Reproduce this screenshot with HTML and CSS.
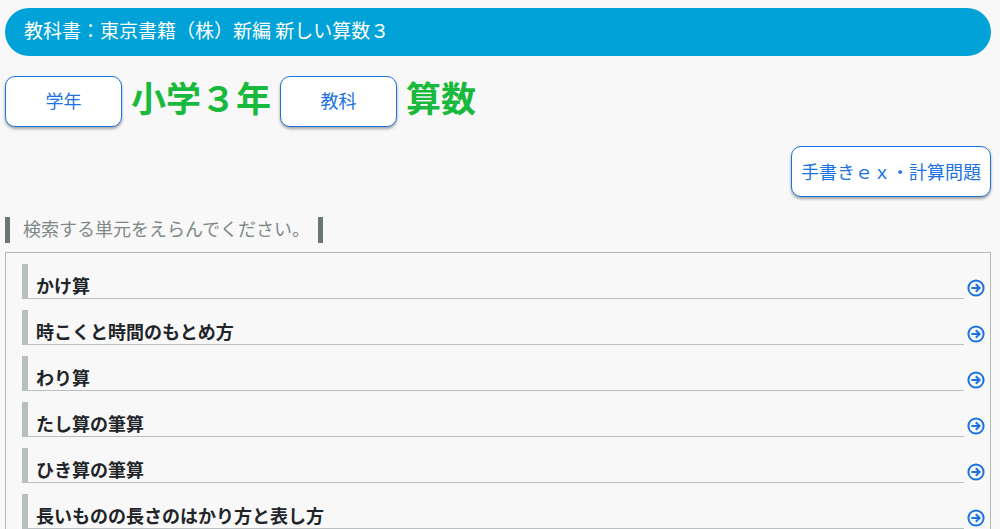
FILE: index.html
```html
<!DOCTYPE html>
<html lang="ja">

<head>
    <meta charset="UTF-8">
    <meta name="viewport" content="width=device-width, initial-scale=1.0">
    <title>小学３年 算数</title>
    <link rel="stylesheet" href="styles.css">
</head>

<body>
    <svg class="defs" aria-hidden="true">
        <symbol id="arrow" viewBox="0 0 18 18">
            <circle cx="9" cy="9" r="7.6" />
            <path d="M4.4 9h8M8.8 5.2L12.6 9l-3.8 3.8" />
        </symbol>
    </svg>

    <header class="book">教科書：東京書籍（株）新編 新しい算数３</header>

    <div class="subject">
        <button type="button" class="btn">学年</button>
        <h1>小学３年</h1>
        <button type="button" class="btn">教科</button>
        <h1>算数</h1>
    </div>

    <div class="tools">
        <a class="btn wide" href="#keisan">手書きｅｘ・計算問題</a>
    </div>

    <p class="guide">検索する単元をえらんでください。</p>

    <ul class="units">
        <li>
            <h2>かけ算</h2>
            <a href="#unit1" aria-label="かけ算"><svg class="icon"><use href="#arrow" /></svg></a>
        </li>
        <li>
            <h2>時こくと時間のもとめ方</h2>
            <a href="#unit2" aria-label="時こくと時間のもとめ方"><svg class="icon"><use href="#arrow" /></svg></a>
        </li>
        <li>
            <h2>わり算</h2>
            <a href="#unit3" aria-label="わり算"><svg class="icon"><use href="#arrow" /></svg></a>
        </li>
        <li>
            <h2>たし算の筆算</h2>
            <a href="#unit4" aria-label="たし算の筆算"><svg class="icon"><use href="#arrow" /></svg></a>
        </li>
        <li>
            <h2>ひき算の筆算</h2>
            <a href="#unit5" aria-label="ひき算の筆算"><svg class="icon"><use href="#arrow" /></svg></a>
        </li>
        <li>
            <h2>長いものの長さのはかり方と表し方</h2>
            <a href="#unit6" aria-label="長いものの長さのはかり方と表し方"><svg class="icon"><use href="#arrow" /></svg></a>
        </li>
    </ul>
</body>

</html>
```
FILE: styles.css
```css
* {
    margin: 0;
    padding: 0;
    box-sizing: border-box;
}

body {
    padding: 8px 9px 8px 5px;
    background-color: #f8f8f8;
    color: #212529;
    font-family: "Noto Sans CJK JP", sans-serif;
    font-size: 18px;
}

.defs {
    display: none;
}

.book {
    padding: 7px 19px 11px;
    border-radius: 24px;
    background-color: #00a2d8;
    color: #fff;
    font-size: 19px;
    line-height: 30px;
}

.subject {
    display: flex;
    align-items: center;
    gap: 9px;
    margin-top: 20px;
}

h1 {
    padding-bottom: 9px;
    color: #18b93c;
    font-size: 35px;
    line-height: 40px;
}

.btn {
    min-width: 117px;
    padding: 0 8px 2px;
    border: 1px solid #1a73e0;
    border-radius: 10px;
    background-color: #fff;
    box-shadow: 0 2px 3px rgba(0, 0, 0, 0.35);
    color: #1a73e0;
    font-family: inherit;
    font-size: 18px;
    line-height: 47px;
    text-align: center;
    text-decoration: none;
    cursor: pointer;
}

.wide {
    padding: 1px 9px;
}

.tools {
    display: flex;
    justify-content: flex-end;
    margin-top: 19px;
}

.guide {
    width: fit-content;
    margin-top: 20px;
    padding: 0 8px 4px 13px;
    border-left: 5px solid #6b7676;
    border-right: 5px solid #6b7676;
    color: #7f8787;
    line-height: 22px;
}

.units {
    padding: 11px 5px 11px 16px;
    margin-top: 9px;
    border: 1px solid #b0baba;
    list-style: none;
}

.units li {
    display: flex;
    align-items: flex-end;
    gap: 3px;
    margin-bottom: 11px;
}

h2 {
    flex: 1;
    padding: 8px 0 0 8px;
    border-left: 6px solid #b8bfc1;
    border-bottom: 1px solid #b8bfc1;
    color: #212529;
    font-size: 18px;
    line-height: 26px;
}

.icon {
    display: block;
    width: 18px;
    height: 18px;
    margin-bottom: 2px;
    fill: none;
    stroke: #1a73e0;
    stroke-width: 2;
}
```
